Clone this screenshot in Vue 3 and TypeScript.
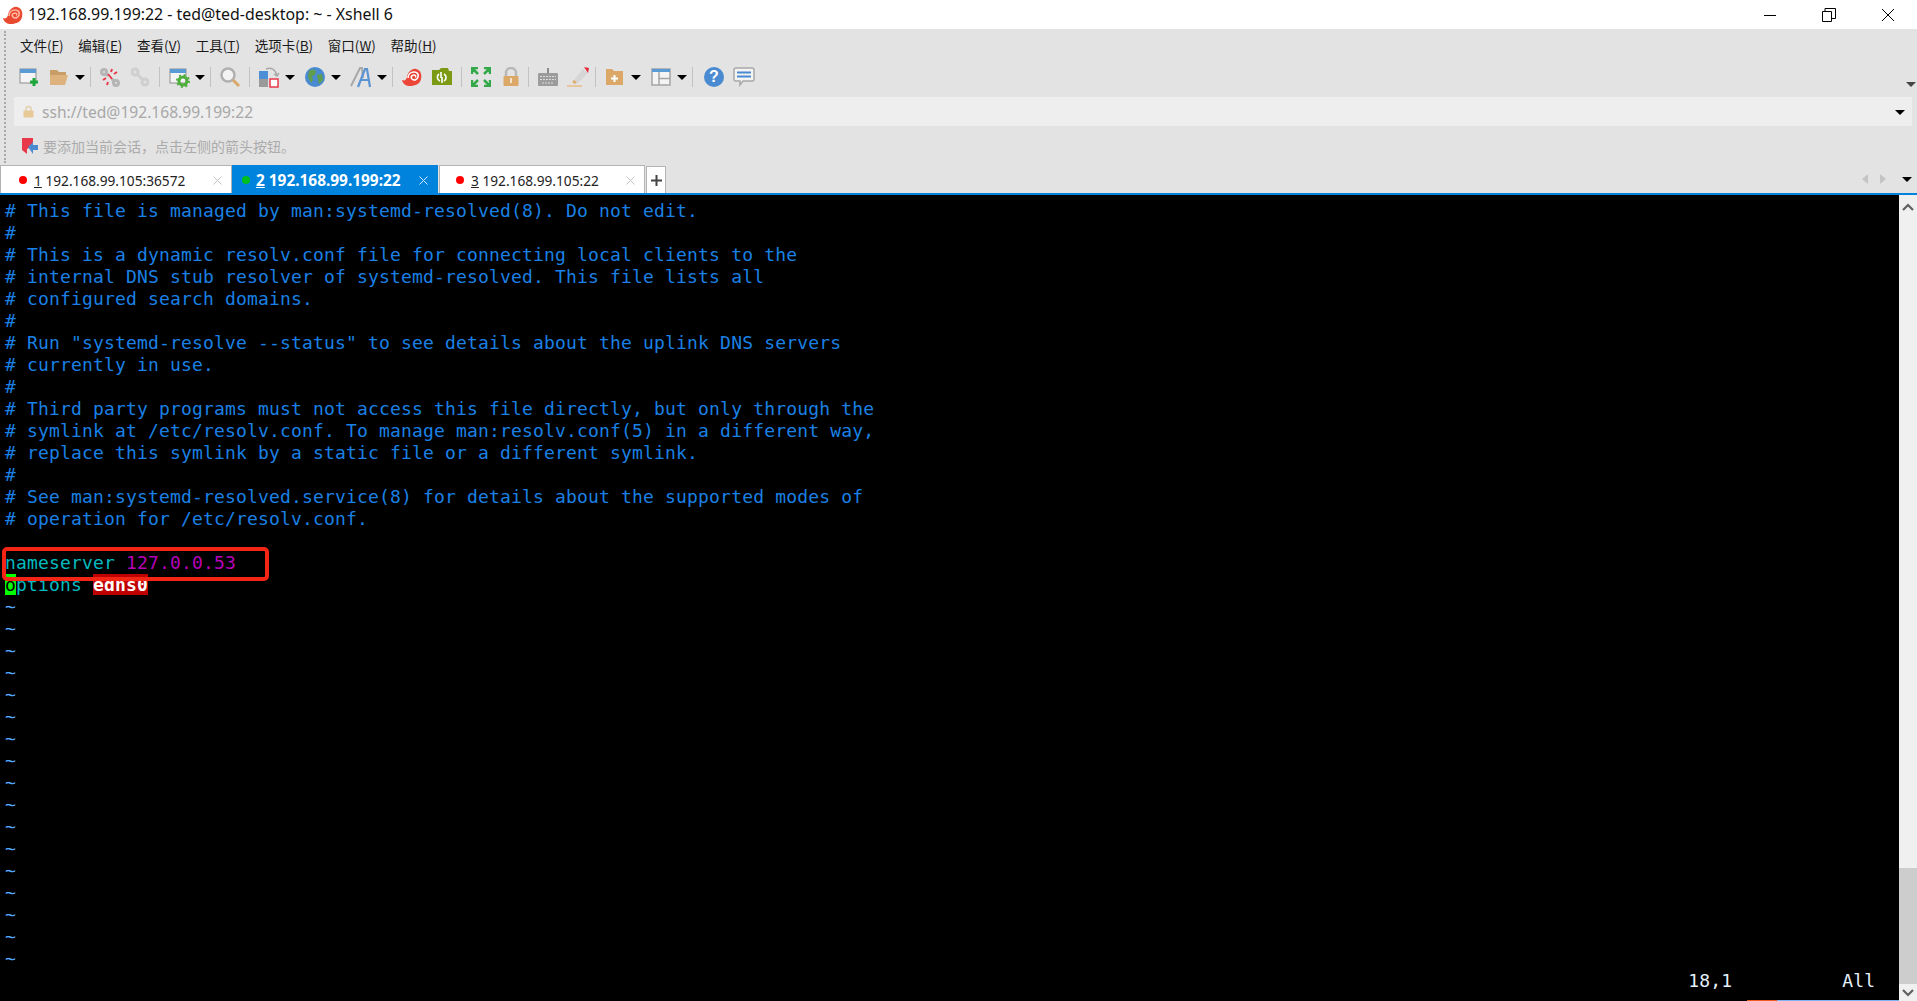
<script setup lang="ts">
interface Menu { label: string; key: string }
interface Tab { num: string; title: string; dot: string; active: boolean }

const menus: Menu[] = [
  { label: '文件', key: 'F' },
  { label: '编辑', key: 'E' },
  { label: '查看', key: 'V' },
  { label: '工具', key: 'T' },
  { label: '选项卡', key: 'B' },
  { label: '窗口', key: 'W' },
  { label: '帮助', key: 'H' },
]

const tabs: Tab[] = [
  { num: '1', title: '192.168.99.105:36572', dot: '#ff0000', active: false },
  { num: '2', title: '192.168.99.199:22', dot: '#00c020', active: true },
  { num: '3', title: '192.168.99.105:22', dot: '#ff0000', active: false },
]

const comments: string[] = [
  '# This file is managed by man:systemd-resolved(8). Do not edit.',
  '#',
  '# This is a dynamic resolv.conf file for connecting local clients to the',
  '# internal DNS stub resolver of systemd-resolved. This file lists all',
  '# configured search domains.',
  '#',
  '# Run "systemd-resolve --status" to see details about the uplink DNS servers',
  '# currently in use.',
  '#',
  '# Third party programs must not access this file directly, but only through the',
  '# symlink at /etc/resolv.conf. To manage man:resolv.conf(5) in a different way,',
  '# replace this symlink by a static file or a different symlink.',
  '#',
  '# See man:systemd-resolved.service(8) for details about the supported modes of',
  '# operation for /etc/resolv.conf.',
]

const tildes: number[] = Array.from({ length: 17 }, (_, i) => i)
const status: string = ' '.repeat(153) + '18,1' + ' '.repeat(10) + 'All'
</script>

<template>
  <div class="window">
    <header class="titlebar">
      <svg class="logo" width="22" height="20" viewBox="0 0 22 20">
        <path d="M1 13c3 1 4 0 5-3 1-5 5-9 9-8 5 1 6 6 5 10-1 5-6 7-11 7-4 0-7-2-8-6z" fill="#e9492f" />
        <path d="M7 11c0-4 3-6 6-6s5 2 4 5-4 4-6 2 0-4 2-4 2 2 1 2" fill="none" stroke="#ffb9a4" stroke-width="1.6" />
      </svg>
      <span class="title">192.168.99.199:22 - ted@ted-desktop: ~ - Xshell 6</span>
      <div class="winbtns">
        <svg width="14" height="14" viewBox="0 0 14 14"><path d="M1 7.500h12" stroke="#000" fill="none" /></svg>
        <svg width="14" height="14" viewBox="0 0 14 14"><path d="M.5 3.500h9v10h-9zM3 3.500V.5h10.500v10H10" stroke="#000" fill="none" /></svg>
        <svg width="14" height="14" viewBox="0 0 14 14"><path d="M1 1l12 12M13 1L1 13" stroke="#000" fill="none" /></svg>
      </div>
    </header>

    <div class="chrome">
      <nav class="menubar">
        <span v-for="m in menus" :key="m.key" class="menu">{{ m.label }}(<u>{{ m.key }}</u>)</span>
      </nav>

      <div class="toolbar">
        <span class="btn">
          <svg width="22" height="22" viewBox="0 0 22 22">
            <rect x="2" y="3" width="16" height="14" fill="#f4f4f4" stroke="#8f8f8f" />
            <rect x="2" y="3" width="16" height="4" fill="#5b9bd5" />
            <path d="M16 12v8M12 16h8" stroke="#1fa83a" stroke-width="3" />
          </svg>
        </span>
        <span class="btn">
          <svg width="22" height="22" viewBox="0 0 22 22">
            <path d="M2 4h7l2 2h7v3H2z" fill="#c99d66" />
            <path d="M2 19V9h18l-3 10z" fill="#ddb27c" />
          </svg>
        </span>
        <span class="drop"></span>
        <i class="sep"></i>
        <span class="btn">
          <svg width="22" height="22" viewBox="0 0 22 22">
            <g fill="none" stroke="#b5b5b5" stroke-width="3"><circle cx="5" cy="6" r="2.500" /><circle cx="17" cy="17" r="2.500" /><path d="M7 8l2 2M13 13l2 2" /></g>
            <path d="M13 3l-1 3M18 6l-3 2M4 14l3-2M8 19l1-3M9 8l4 5" stroke="#e8394a" stroke-width="2" fill="none" />
          </svg>
        </span>
        <span class="btn">
          <svg width="22" height="22" viewBox="0 0 22 22">
            <g fill="none" stroke="#cfcfcf" stroke-width="3"><circle cx="6" cy="6" r="3" /><circle cx="16" cy="16" r="3" /><path d="M8 8l6 6" /></g>
          </svg>
        </span>
        <i class="sep"></i>
        <span class="btn">
          <svg width="22" height="22" viewBox="0 0 22 22">
            <rect x="2" y="3" width="16" height="14" fill="#f4f4f4" stroke="#8f8f8f" />
            <rect x="2" y="3" width="16" height="4" fill="#5b9bd5" />
            <circle cx="15" cy="15" r="4" fill="none" stroke="#4fae3c" stroke-width="3" />
            <circle cx="15" cy="15" r="6" fill="none" stroke="#4fae3c" stroke-width="2" stroke-dasharray="2 2.700" />
          </svg>
        </span>
        <span class="drop"></span>
        <i class="sep"></i>
        <span class="btn">
          <svg width="22" height="22" viewBox="0 0 22 22">
            <circle cx="9" cy="9" r="6.500" fill="#f3f3f3" stroke="#b0b0b0" stroke-width="2.500" />
            <path d="M14 14l6 6" stroke="#d9a96c" stroke-width="3" />
          </svg>
        </span>
        <i class="sep"></i>
        <span class="btn">
          <svg width="22" height="22" viewBox="0 0 22 22">
            <rect x="1" y="5" width="9" height="8" fill="#4d8fd6" />
            <rect x="1" y="13" width="9" height="8" fill="#9a9a9a" />
            <rect x="12" y="13" width="8" height="8" fill="#fff" stroke="#e8394a" stroke-width="1.500" />
            <path d="M8 3c6-2 10 1 11 7M21 7l-2 3-3-2" fill="none" stroke="#a8a8a8" stroke-width="1.500" />
          </svg>
        </span>
        <span class="drop gap"></span>
        <span class="btn">
          <svg width="22" height="22" viewBox="0 0 22 22">
            <circle cx="11" cy="11" r="10" fill="#4a8ad0" />
            <path d="M5 5c3-2 5-2 7 0l-1 4-3 1 1 4-2 3-3-6zM13 9l5-1 1 6-4 4-1-4z" fill="#5f9e4e" />
          </svg>
        </span>
        <span class="drop gap"></span>
        <span class="btn">
          <svg width="24" height="22" viewBox="0 0 24 22">
            <path d="M2 20L11 2h2l1 10" fill="none" stroke="#a9a9a9" stroke-width="2" />
            <path d="M9 21l7-18h2l3 18M12 14h8" fill="none" stroke="#5b93d3" stroke-width="2.200" />
          </svg>
        </span>
        <span class="drop"></span>
        <i class="sep"></i>
        <span class="btn">
          <svg width="22" height="20" viewBox="0 0 22 20">
            <path d="M1 13c3 1 4 0 5-3 1-5 5-9 9-8 5 1 6 6 5 10-1 5-6 7-11 7-4 0-7-2-8-6z" fill="#ec4638" />
            <path d="M7 11c0-4 3-6 6-6s5 2 4 5-4 4-6 2 0-4 2-4 2 2 1 2" fill="none" stroke="#fff" stroke-width="1.600" />
          </svg>
        </span>
        <span class="btn">
          <svg width="22" height="20" viewBox="0 0 22 20">
            <path d="M1 3h7l2-2h7l1 3h3v14H1z" fill="#7d9a14" />
            <path d="M8 7a4 4 0 0 0 1 7M13 7a4 4 0 0 1 0 7M10 5v6M11 10v6" fill="none" stroke="#fff" stroke-width="1.600" />
          </svg>
        </span>
        <i class="sep"></i>
        <span class="btn">
          <svg width="20" height="20" viewBox="0 0 20 20">
            <g fill="none" stroke="#34a94a" stroke-width="2.500">
              <path d="M1 7V1h6M1 1l6 6M19 7V1h-6M19 1l-6 6M1 13v6h6M1 19l6-6M19 13v6h-6M19 19l-6-6" />
            </g>
          </svg>
        </span>
        <span class="btn">
          <svg width="18" height="20" viewBox="0 0 18 20">
            <path d="M4 10V6a5 5 0 0 1 10 0v4" fill="none" stroke="#b8b8b8" stroke-width="2.500" />
            <rect x="1.500" y="9" width="15" height="10" rx="1" fill="#dba868" />
            <rect x="8" y="11" width="2" height="5" fill="#f3e3cc" />
          </svg>
        </span>
        <i class="sep tight"></i>
        <span class="btn">
          <svg width="22" height="20" viewBox="0 0 22 20">
            <path d="M11 1v6" stroke="#8c8c8c" stroke-width="2" />
            <rect x="1" y="6" width="20" height="13" rx="1" fill="#9c9c9c" />
            <path d="M3 9.500h16M3 12.500h16M5 16h12" stroke="#dcdcdc" stroke-dasharray="2 1" />
          </svg>
        </span>
        <span class="btn">
          <svg width="24" height="22" viewBox="0 0 24 22">
            <path d="M8 14l9-11 5 4-10 10-5 1z" fill="#d6d6d6" />
            <path d="M18 1l5 1-1 5z" fill="#e8283a" />
            <path d="M1 20h15" stroke="#e9bd86" stroke-width="1.500" />
            <path d="M7 15l3 2" stroke="#e3aa69" stroke-width="2.500" />
          </svg>
        </span>
        <i class="sep tight"></i>
        <span class="btn">
          <svg width="20" height="18" viewBox="0 0 20 18">
            <path d="M1 1h6l2 2h9v14H1z" fill="#dba868" />
            <path d="M9.500 7v7M6 10.500h7" stroke="#fff" stroke-width="2" />
          </svg>
        </span>
        <span class="drop gap"></span>
        <span class="btn">
          <svg width="20" height="18" viewBox="0 0 20 18">
            <rect x="1" y="1" width="18" height="16" fill="#f4f4f4" stroke="#a5a5a5" stroke-width="1.500" />
            <rect x="1" y="1" width="18" height="3" fill="#5b9bd5" />
            <path d="M8 4v13M8 10.500h11" stroke="#a5a5a5" stroke-width="1.500" />
          </svg>
        </span>
        <span class="drop"></span>
        <i class="sep"></i>
        <span class="btn help">
          <svg width="22" height="22" viewBox="0 0 22 22">
            <circle cx="11" cy="11" r="10" fill="#4a8ad0" />
            <text x="11" y="16" text-anchor="middle" class="q">?</text>
          </svg>
        </span>
        <span class="btn">
          <svg width="22" height="20" viewBox="0 0 22 20">
            <path d="M3 1h16a2 2 0 0 1 2 2v9a2 2 0 0 1-2 2H10l-3 4v-4H3a2 2 0 0 1-2-2V3a2 2 0 0 1 2-2z" fill="#f4f4f4" stroke="#a8a8a8" stroke-width="1.500" />
            <path d="M4 5.500h14M4 9.500h14" stroke="#4a8ad0" stroke-width="2" />
          </svg>
        </span>
        <span class="drop small"></span>
      </div>

      <div class="address">
        <svg width="11" height="13" viewBox="0 0 11 13">
          <path d="M3 6V4a2.500 2.500 0 0 1 5 0v2" fill="none" stroke="#e3cfa9" stroke-width="1.500" />
          <rect x="0.500" y="5.500" width="10" height="7" rx="1" fill="#e7c897" />
        </svg>
        <span class="url">ssh://ted@192.168.99.199:22</span>
        <span class="drop addr"></span>
      </div>

      <div class="linkbar">
        <svg width="18" height="18" viewBox="0 0 18 18">
          <path d="M1 1h11v8l-6 3v5L1 13z" fill="#e8394a" />
          <path d="M7 10l5-5v3h5v5h-5v4z" fill="#4a8ad0" />
        </svg>
        <span class="hint">要添加当前会话，点击左侧的箭头按钮。</span>
      </div>

      <div class="tabs">
        <div v-for="t in tabs" :key="t.num" class="tab" :class="{ active: t.active }">
          <span class="dot" :style="{ background: t.dot }"></span>
          <span class="tabtext"><u>{{ t.num }}</u> {{ t.title }}</span>
          <svg class="close" width="9" height="9" viewBox="0 0 9 9"><path d="M.5.500l8 8M8.500.5l-8 8" fill="none" /></svg>
        </div>
        <div class="plus">
          <svg width="11" height="11" viewBox="0 0 11 11"><path d="M5.500 0v11M0 5.500h11" stroke="#444" stroke-width="2" /></svg>
        </div>
        <div class="tabnav">
          <span class="tri left"></span>
          <span class="tri right"></span>
          <span class="drop"></span>
        </div>
      </div>
    </div>

    <main class="body">
      <div class="term">
        <div v-for="(c, i) in comments" :key="i" class="row comment">{{ c }}</div>
        <div class="row">&nbsp;</div>
        <div class="row"><span class="cyan">nameserver</span> <span class="magenta">127.0.0.53</span></div>
        <div class="row"><span class="cursor">o</span><span class="cyan">ptions</span> <span class="err">edns0</span></div>
        <div v-for="n in tildes" :key="'t' + n" class="row tilde">~</div>
        <div class="row status">{{ status }}</div>
        <div class="mark"></div>
      </div>
      <aside class="scroll">
        <svg width="14" height="9" viewBox="0 0 14 9"><path d="M2 8l5-5 5 5" fill="none" stroke="#606060" stroke-width="2.200" /></svg>
        <div class="track"><div class="thumb"></div></div>
        <svg width="14" height="9" viewBox="0 0 14 9"><path d="M2 1l5 5 5-5" fill="none" stroke="#606060" stroke-width="2.200" /></svg>
      </aside>
      <div class="strip"><i></i></div>
    </main>
  </div>
</template>

<style scoped>
.window {
  width: 1917px;
  height: 1001px;
  display: flex;
  flex-direction: column;
  overflow: hidden;
  font-family: "Noto Sans", "Noto Sans CJK SC", sans-serif;
  background: #000;
}
.titlebar {
  height: 29px;
  flex: none;
  background: #fff;
  display: flex;
  align-items: center;
  padding-left: 2px;
}
.logo { flex: none; }
.title {
  margin-left: 4px;
  margin-top: -2px;
  font-size: 15.900px;
  color: #111;
  white-space: pre;
}
.winbtns {
  margin-left: auto;
  display: flex;
  gap: 45px;
  padding-right: 22px;
}
.chrome {
  flex: none;
  background: #e3e3e3;
  position: relative;
}
.chrome::before {
  content: "";
  position: absolute;
  left: 4px;
  top: 2px;
  height: 132px;
  border-left: 2px dotted #a9a9a9;
}
.menubar {
  height: 31px;
  display: flex;
  align-items: center;
  gap: 14.700px;
  padding-left: 20px;
  font-family: "Noto Sans CJK SC", sans-serif;
  font-size: 13.500px;
  color: #1a1a1a;
}
.toolbar {
  height: 34px;
  margin-bottom: 3px;
  display: flex;
  align-items: center;
  padding-left: 14px;
  position: relative;
}
.btn {
  width: 30px;
  height: 24px;
  flex: none;
  display: flex;
  align-items: center;
  justify-content: center;
}
.drop {
  width: 12px;
  flex: none;
  height: 4px;
  position: relative;
}
.drop::after {
  content: "";
  position: absolute;
  left: 1px;
  top: 0;
  border-left: 5px solid transparent;
  border-right: 5px solid transparent;
  border-top: 5px solid #000;
}
.drop.gap { margin-right: 4px; }
.drop.small {
  position: absolute;
  right: 0;
  top: 22px;
}
.drop.small::after { opacity: .7; }
.sep {
  width: 9px;
  flex: none;
  height: 20px;
  position: relative;
}
.sep::after {
  content: "";
  position: absolute;
  left: 4px;
  top: 0;
  bottom: 0;
  border-left: 1px solid #c2c2c2;
}
.sep.tight { margin-left: -2px; }
.btn.help { margin-left: 2px; }
.q {
  font-family: "Liberation Sans", sans-serif;
  font-size: 16px;
  font-weight: 700;
  fill: #fff;
}
.address {
  height: 29px;
  margin: 0 5px 0 14px;
  background: #eeeeee;
  display: flex;
  align-items: center;
  padding-left: 9px;
  position: relative;
}
.url {
  margin-left: 8px;
  margin-top: 1px;
  font-size: 15.600px;
  color: #a8a8a8;
}
.drop.addr {
  position: absolute;
  right: 6px;
  top: 13px;
}
.linkbar {
  height: 39px;
  display: flex;
  align-items: center;
  padding-left: 21px;
}
.hint {
  margin-left: 4px;
  font-family: "Noto Sans CJK SC", sans-serif;
  font-size: 14px;
  color: #ababab;
}
.tabs {
  height: 30px;
  box-sizing: border-box;
  border-bottom: 2px solid #0083dd;
  display: flex;
  align-items: stretch;
}
.tab {
  width: 232px;
  box-sizing: border-box;
  background: #fff;
  border: 1px solid #b4b4b4;
  border-bottom: 0;
  display: flex;
  align-items: center;
  padding-left: 18px;
  position: relative;
  font-size: 13.700px;
  color: #222;
}
.tab + .tab { width: 206px; padding-left: 9px; }
.tab:nth-child(3) { margin-left: 1px; padding-left: 16px; }
.tab.active {
  background: #0083dd;
  border-color: #0083dd;
  color: #fff;
  font-weight: 700;
  font-size: 15.400px;
}
.dot {
  width: 8px;
  height: 8px;
  border-radius: 50%;
  flex: none;
}
.tabtext {
  margin-left: 7px;
  margin-top: 1px;
  white-space: pre;
}
.active .tabtext { margin-left: 6px; }
.close {
  position: absolute;
  right: 9px;
  top: 10px;
  stroke: #c4c4c4;
}
.active .close { stroke: #cfe8fa; }
.plus {
  width: 20px;
  margin-left: 1px;
  margin-top: 1px;
  box-sizing: border-box;
  background: #fff;
  border: 1px solid #b4b4b4;
  border-bottom: 0;
  display: flex;
  align-items: center;
  justify-content: center;
}
.tabnav {
  margin-left: auto;
  display: flex;
  align-items: center;
  padding-right: 3px;
}
.tri {
  width: 0;
  height: 0;
  border-top: 5.500px solid transparent;
  border-bottom: 5.500px solid transparent;
}
.tri.left { border-right: 6px solid #c4c4c4; }
.tri.right { border-left: 6px solid #c4c4c4; margin-left: 12px; margin-right: 16px; }
.tabnav .drop { height: 5px; }
.tabnav .drop::after { top: 0; left: 0; }
.body {
  flex: 1;
  min-height: 0;
  display: flex;
  position: relative;
  background: #000;
}
.term {
  flex: 1;
  min-width: 0;
  box-sizing: border-box;
  padding: 5px 0 0 5px;
  position: relative;
  font-family: "DejaVu Sans Mono", monospace;
  font-size: 18px;
  letter-spacing: 0.165px;
  line-height: 22px;
  overflow: hidden;
}
.row { height: 22px; white-space: pre; }
.comment { color: #1a80e5; }
.cyan { color: #00bcc0; }
.magenta { color: #b800b8; }
.cursor { background: #00ff00; color: #000; }
.err { background: #bf0000; color: #fff; font-weight: 700; }
.tilde { color: #55aaff; }
.status { color: #e4f0fa; }
.mark {
  position: absolute;
  left: 2px;
  top: 352px;
  width: 267px;
  height: 34px;
  box-sizing: border-box;
  border: 4px solid #f52516;
  border-radius: 5px;
}
.scroll {
  width: 18px;
  flex: none;
  background: #f0f0f0;
  display: flex;
  flex-direction: column;
  align-items: center;
  padding: 7px 0 3px;
  box-sizing: border-box;
}
.track {
  flex: 1;
  width: 100%;
  display: flex;
  flex-direction: column;
  justify-content: flex-end;
  padding: 0 0 5px;
  box-sizing: border-box;
}
.thumb {
  height: 116px;
  background: #cdcdcd;
}
.strip {
  position: absolute;
  left: 1747px;
  right: 18px;
  bottom: 0;
  height: 1px;
  background: #7fb2f0;
}
.strip i {
  display: block;
  width: 30px;
  height: 1px;
  background: #f05a22;
}
</style>

<style>
html, body {
  margin: 0;
  background: #000;
  overflow: hidden;
}
</style>
